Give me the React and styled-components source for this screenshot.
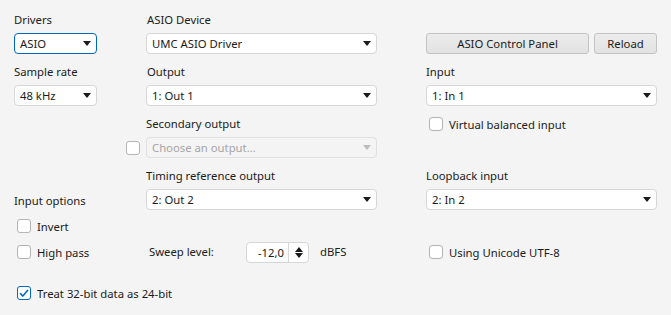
import React from 'react';
import styled, { createGlobalStyle } from 'styled-components';

const GlobalStyle = createGlobalStyle`
  html, body {
    margin: 0;
    padding: 0;
    background: #f4f4f4;
  }
  body {
    font-family: "Segoe UI", "Noto Sans", "Open Sans", sans-serif;
    font-size: 11.3px;
    color: #1b1b1b;
  }
`;

const Page = styled.div`
  width: 671px;
  height: 315px;
  box-sizing: border-box;
  padding: 11px 0 0 14px;
  background: #f4f4f4;
`;

// 5 columns: left column, checkbox slot, middle column, gap, right column
const Row = styled.div`
  display: grid;
  grid-template-columns: 112px 20px 231px 49px 231px;
  align-items: center;
  height: ${p => p.h || 18}px;
  margin-top: ${p => p.mt || 0}px;
`;

const Label = styled.div`
  grid-column: ${p => p.col};
  line-height: 18px;
  white-space: nowrap;
  padding-left: ${p => p.indent || 0}px;
`;

const InlineLabel = styled.div`
  box-sizing: border-box;
  width: ${p => p.w || 'auto'};
  padding-left: ${p => p.indent || 0}px;
  white-space: nowrap;
  line-height: 18px;
`;

const Cell = styled.div`
  grid-column: ${p => p.col};
  display: flex;
  align-items: center;
  min-width: 0;
`;

const SelectBox = styled.div`
  box-sizing: border-box;
  width: ${p => p.w || 231}px;
  height: 21px;
  display: flex;
  align-items: center;
  justify-content: space-between;
  padding: 0 5px 0 5px;
  border: 1px solid ${p => (p.focused ? '#0067c0' : p.disabled ? '#e0e0e0' : '#d6d6d6')};
  border-radius: 4px;
  background: ${p => (p.disabled ? '#f4f4f4' : '#ffffff')};
  color: ${p => (p.disabled ? '#a6a6a6' : '#1b1b1b')};
  white-space: nowrap;
`;

const Arrow = styled.span`
  width: 0;
  height: 0;
  border-left: 4.5px solid transparent;
  border-right: 4.5px solid transparent;
  border-top: 5px solid ${p => (p.disabled ? '#bdbdbd' : '#1b1b1b')};
`;

const Button = styled.div`
  box-sizing: border-box;
  height: 21px;
  width: ${p => p.w}px;
  display: flex;
  align-items: center;
  justify-content: center;
  border: 1px solid #c3c3c3;
  border-radius: 3px;
  background: linear-gradient(#ececec, #e2e2e2);
  color: #1b1b1b;
`;

const Buttons = styled.div`
  grid-column: 5;
  display: flex;
  gap: 5px;
`;

const Check = styled.span`
  box-sizing: border-box;
  width: 14px;
  height: 14px;
  flex: none;
  border: 1px solid ${p => (p.checked ? '#0067c0' : '#b4b4b4')};
  border-radius: 3px;
  background: #fff;
  display: flex;
  align-items: center;
  justify-content: center;
`;

const CheckLine = styled.div`
  grid-column: ${p => p.col};
  display: flex;
  align-items: center;
  gap: 6px;
  padding-left: ${p => p.indent || 0}px;
  white-space: nowrap;
`;

const SpinBox = styled.div`
  box-sizing: border-box;
  width: 63px;
  height: 21px;
  display: flex;
  border: 1px solid #d6d6d6;
  border-radius: 4px;
  background: #fff;
`;

const SpinValue = styled.div`
  flex: 1;
  text-align: right;
  padding-right: 4px;
  line-height: 19px;
`;

const SpinArrows = styled.div`
  width: 19px;
  border-left: 1px solid #d6d6d6;
  display: flex;
  flex-direction: column;
  align-items: center;
  justify-content: center;
  gap: 1px;
`;

const Tri = styled.span`
  width: 0;
  height: 0;
  border-left: 4.5px solid transparent;
  border-right: 4.5px solid transparent;
  ${p => (p.up ? 'border-bottom: 5px solid #1b1b1b;' : 'border-top: 5px solid #1b1b1b;')}
`;

const Select = ({ value, w, focused, disabled }) => (
  <SelectBox w={w} focused={focused} disabled={disabled}>
    <span>{value}</span>
    <Arrow disabled={disabled} />
  </SelectBox>
);

const CheckBox = ({ checked }) => (
  <Check checked={checked}>
    {checked && (
      <svg width="10" height="8" viewBox="0 0 10 8">
        <path d="M1 4.2 L3.8 7 L9 1" fill="none" stroke="#0067c0" strokeWidth="1.6" />
      </svg>
    )}
  </Check>
);

export default function App() {
  return (
    <Page>
      <GlobalStyle />
      <Row>
        <Label col={1}>Drivers</Label>
        <Label col={3} indent={1}>ASIO Device</Label>
      </Row>
      <Row h={21} mt={4}>
        <Cell col={1}><Select value="ASIO" w={83} focused /></Cell>
        <Cell col={3}><Select value="UMC ASIO Driver" /></Cell>
        <Buttons>
          <Button w={163}>ASIO Control Panel</Button>
          <Button w={63}>Reload</Button>
        </Buttons>
      </Row>
      <Row mt={9}>
        <Label col={1}>Sample rate</Label>
        <Label col={3} indent={1}>Output</Label>
        <Label col={5}>Input</Label>
      </Row>
      <Row h={21} mt={4}>
        <Cell col={1}><Select value="48 kHz" w={83} /></Cell>
        <Cell col={3}><Select value="1: Out 1" /></Cell>
        <Cell col={5}><Select value="1: In 1" /></Cell>
      </Row>
      <Row mt={9}>
        <Label col={3}>Secondary output</Label>
        <CheckLine col={5} indent={3}><CheckBox />Virtual balanced input</CheckLine>
      </Row>
      <Row h={21} mt={4}>
        <Cell col={2}><CheckBox /></Cell>
        <Cell col={3}><Select value="Choose an output..." disabled /></Cell>
      </Row>
      <Row mt={9}>
        <Label col={3}>Timing reference output</Label>
        <Label col={5}>Loopback input</Label>
      </Row>
      <Row h={21} mt={4}>
        <Label col={1} style={{ alignSelf: 'end', lineHeight: '19px' }}>Input options</Label>
        <Cell col={3}><Select value="2: Out 2" /></Cell>
        <Cell col={5}><Select value="2: In 2" /></Cell>
      </Row>
      <Row h={20} mt={6}>
        <CheckLine col={1} indent={3}><CheckBox />Invert</CheckLine>
      </Row>
      <Row h={22} mt={5}>
        <CheckLine col={1} indent={3}><CheckBox />High pass</CheckLine>
        <Cell col={3}>
          <InlineLabel w="100px" indent={3}>Sweep level:</InlineLabel>
          <SpinBox>
            <SpinValue>-12,0</SpinValue>
            <SpinArrows>
              <Tri up />
              <Tri />
            </SpinArrows>
          </SpinBox>
          <InlineLabel indent={11}>dBFS</InlineLabel>
        </Cell>
        <CheckLine col={5} indent={3}><CheckBox />Using Unicode UTF-8</CheckLine>
      </Row>
      <Row h={20} mt={20}>
        <CheckLine col="1 / 4" indent={3}><CheckBox checked />Treat 32-bit data as 24-bit</CheckLine>
      </Row>
    </Page>
  );
}
